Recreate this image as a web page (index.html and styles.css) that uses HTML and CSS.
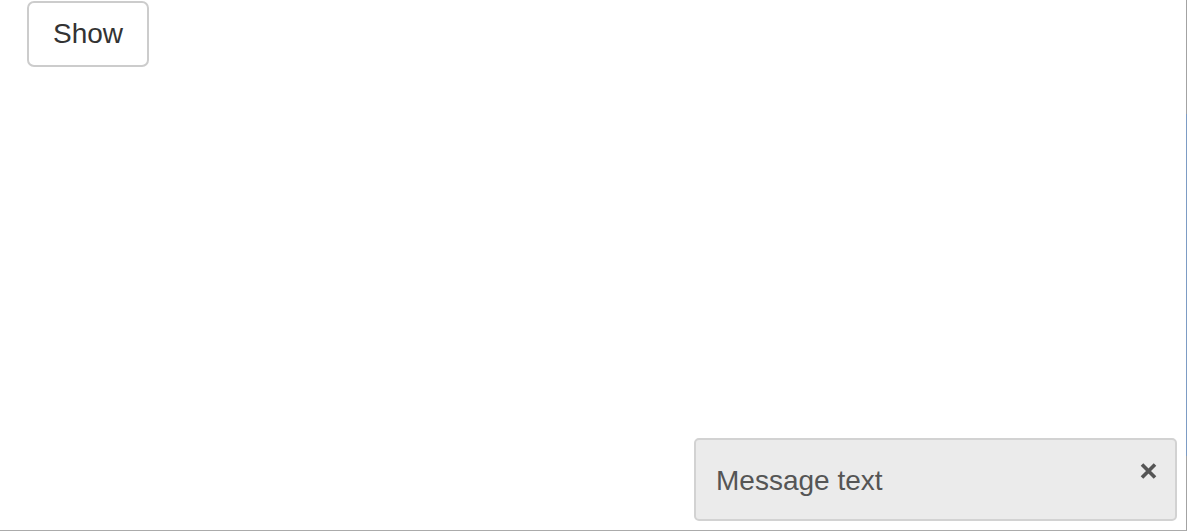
FILE: index.html
```html
<!DOCTYPE html>
<html lang="en">
<head>
<meta charset="utf-8">
<title>Toast demo</title>
<link rel="stylesheet" href="styles.css">
</head>
<body>
<div class="frame">
  <div class="toolbar">
    <button class="btn" type="button">Show</button>
  </div>
  <div class="toast" role="status">
    <span class="toast-text">Message text</span>
    <button class="toast-close" type="button" aria-label="Close">
      <svg width="17" height="16" viewBox="0 0 17 16" aria-hidden="true">
        <path d="M2 1.5 L15 14.5 M15 1.5 L2 14.5" stroke="#555" stroke-width="3.6" stroke-linecap="butt" fill="none"/>
      </svg>
    </button>
  </div>
</div>
</body>
</html>
```
FILE: styles.css
```css
html, body {
  margin: 0;
  padding: 0;
  background: #fff;
  font-family: "Liberation Sans", Arial, Helvetica, sans-serif;
  overflow: hidden;
}

.frame {
  position: relative;
  width: 1186px;
  height: 530px;
  border-right: 1px solid #a3a3a3;
  border-bottom: 1px solid #ababab;
}

.frame::after {
  content: "";
  position: absolute;
  top: 114px;
  right: -1px;
  width: 1px;
  height: 342px;
  background: #7d9cc4;
}

.toolbar {
  display: flex;
  padding: 1px 0 0 27px;
}

.btn {
  box-sizing: border-box;
  width: 122px;
  height: 66px;
  display: flex;
  align-items: center;
  justify-content: center;
  padding: 0;
  background: #fff;
  border: 2px solid #cccccc;
  border-radius: 7px;
  font-family: "Liberation Sans", Arial, Helvetica, sans-serif;
  font-size: 28px;
  line-height: 32px;
  color: #333;
}

.toast {
  position: fixed;
  right: 11px;
  bottom: 11px;
  box-sizing: border-box;
  width: 483px;
  height: 83px;
  display: flex;
  justify-content: space-between;
  align-items: flex-start;
  padding: 25px 18px 22px 20px;
  background: #ebebeb;
  border: 2px solid #d2d2d2;
  border-radius: 5px;
}

.toast-text {
  font-size: 28px;
  line-height: 32px;
  color: #555;
}

.toast-close {
  display: flex;
  margin-top: -2px;
  padding: 0;
  border: 0;
  background: none;
}
```
